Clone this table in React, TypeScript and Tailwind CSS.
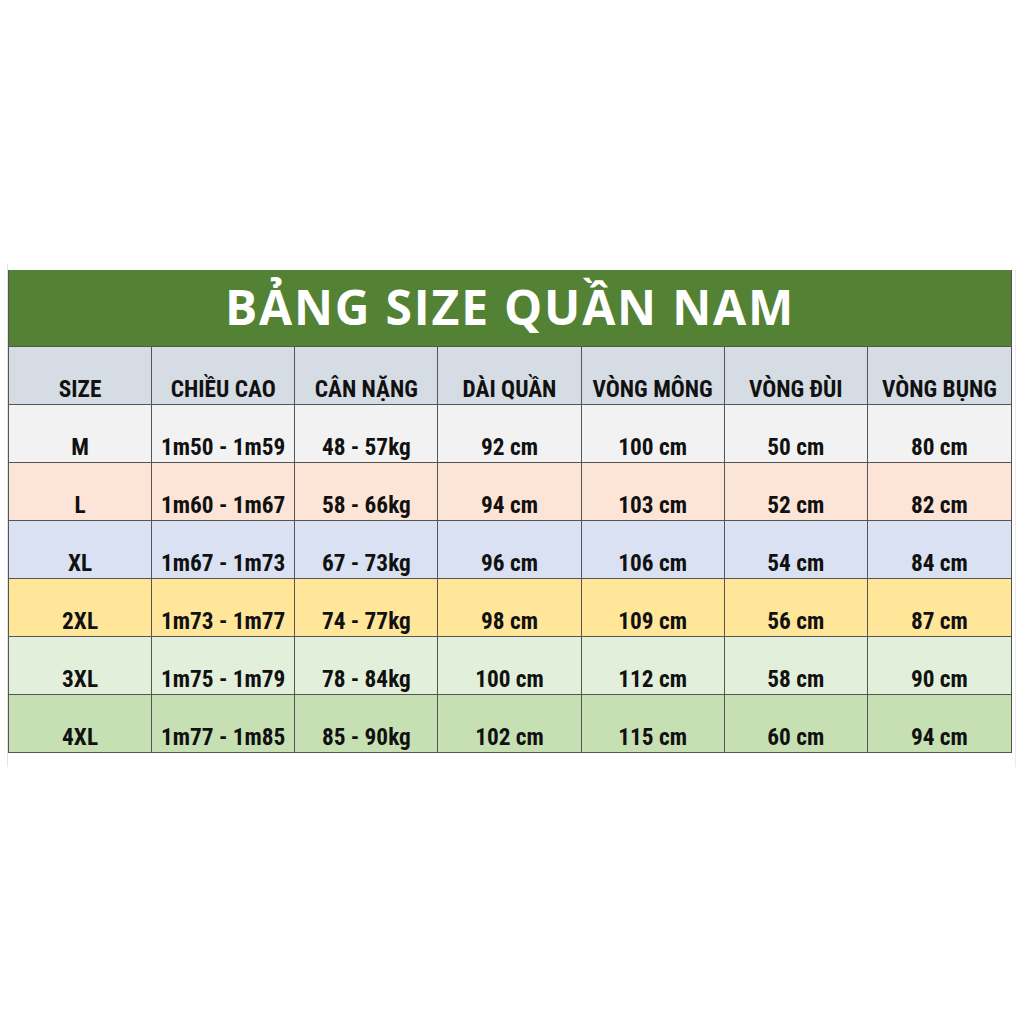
const rows = [
  { bg: "bg-[#f2f2f2]", cells: ["M", "1m50 - 1m59", "48 - 57kg", "92 cm", "100 cm", "50 cm", "80 cm"] },
  { bg: "bg-[#fce4d6]", cells: ["L", "1m60 - 1m67", "58 - 66kg", "94 cm", "103 cm", "52 cm", "82 cm"] },
  { bg: "bg-[#d9e1f2]", cells: ["XL", "1m67 - 1m73", "67 - 73kg", "96 cm", "106 cm", "54 cm", "84 cm"] },
  { bg: "bg-[#ffe699]", cells: ["2XL", "1m73 - 1m77", "74 - 77kg", "98 cm", "109 cm", "56 cm", "87 cm"] },
  { bg: "bg-[#e2efda]", cells: ["3XL", "1m75 - 1m79", "78 - 84kg", "100 cm", "112 cm", "58 cm", "90 cm"] },
  { bg: "bg-[#c6e0b4]", cells: ["4XL", "1m77 - 1m85", "85 - 90kg", "102 cm", "115 cm", "60 cm", "94 cm"] },
];

const headers = ["SIZE", "CHIỀU CAO", "CÂN NẶNG", "DÀI QUẦN", "VÒNG MÔNG", "VÒNG ĐÙI", "VÒNG BỤNG"];

const cellFont = "font-['Roboto_Condensed','Liberation_Sans_Narrow','DejaVu_Sans_Condensed',sans-serif]";

const Row = ({ cells, bg }: { cells: string[]; bg: string }) => (
  <div className={`grid grid-cols-7 h-[58px] ${bg}`}>
    {cells.map((c, i) => (
      <div
        key={i}
        className={`flex items-end justify-center pb-[3px] border-b border-[#555] text-[23.3px] leading-none font-bold text-[#111] ${cellFont} ${
          i < 6 ? "border-r" : ""
        }`}
      >
        {c}
      </div>
    ))}
  </div>
);

export default function App() {
  return (
    <div className="w-[1024px] h-[1024px] bg-white pt-[270px]">
      <div className="relative mx-[8px] w-[1004px]">
        <div className="absolute left-[-1px] top-[-6px] bottom-[-14px] w-px bg-[#e4e4e4]" />
        <div className="absolute right-[-4px] top-0 bottom-[-14px] w-px bg-[#ececec]" />
        <div className="border-l border-r border-[#555]">
          <div className="h-[77px] bg-[#548235] border-b border-[#555] flex items-center justify-center">
            <span className="text-white text-[48px] tracking-[1.8px] font-bold leading-none font-['Open_Sans',sans-serif] pb-[2px]">
              BẢNG SIZE QUẦN NAM
            </span>
          </div>
          <Row cells={headers} bg="bg-[#d6dce4]" />
          {rows.map((r, i) => (
            <Row key={i} cells={r.cells} bg={r.bg} />
          ))}
        </div>
      </div>
    </div>
  );
}
